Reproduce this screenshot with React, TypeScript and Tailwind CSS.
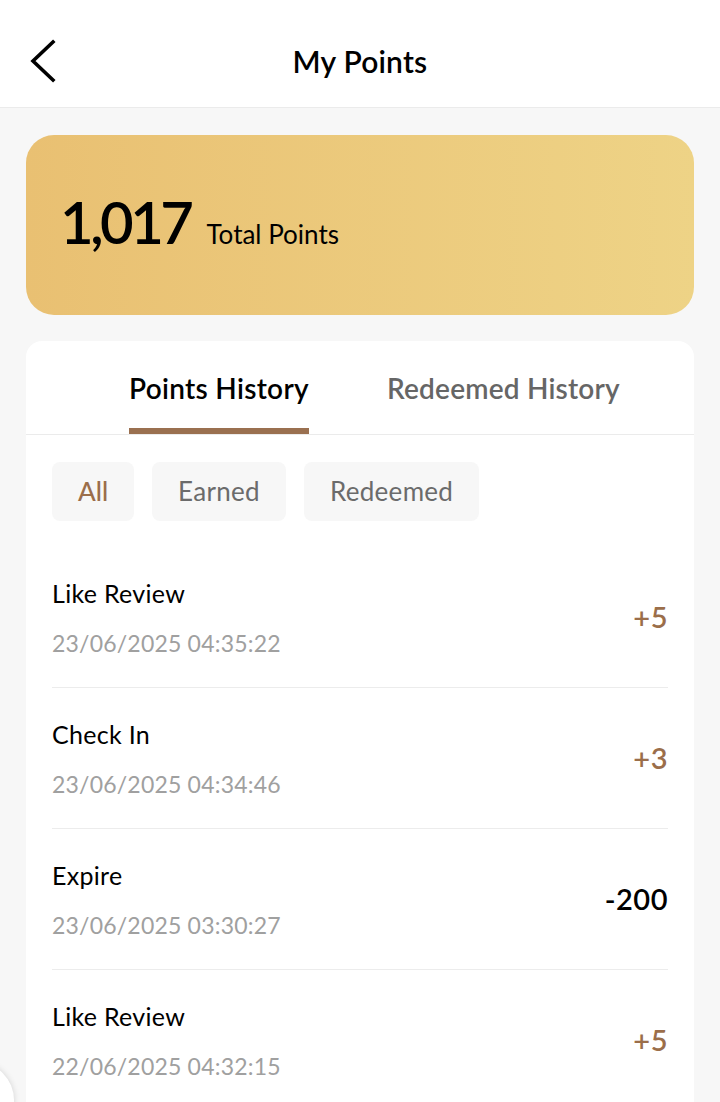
import React from "react";

const rows = [
  { title: "Like Review", date: "23/06/2025 04:35:22", amount: "+5", pos: true },
  { title: "Check In", date: "23/06/2025 04:34:46", amount: "+3", pos: true },
  { title: "Expire", date: "23/06/2025 03:30:27", amount: "-200", pos: false },
  { title: "Like Review", date: "22/06/2025 04:32:15", amount: "+5", pos: true },
];

export default function App() {
  return (
    <div
      className="relative h-[1102px] overflow-hidden bg-[#f7f7f7] text-black"
      style={{ fontFamily: "Lato, 'Noto Sans', sans-serif" }}
    >
      <header className="grid h-[108px] grid-cols-[1fr_auto_1fr] items-center border-b border-[#ebebeb] bg-white pt-[14px]">
        <div className="pl-[28px]">
          <svg width="30" height="44" viewBox="0 0 30 44" fill="none">
            <path d="M25 3 L5 22 L25 41" stroke="#000" strokeWidth="3.6" strokeLinecap="square" strokeLinejoin="miter" />
          </svg>
        </div>
        <h1 className="text-[30px] font-semibold leading-none tracking-[0.2px]">My Points</h1>
        <div />
      </header>

      <div className="mx-[26px] mt-[27px] flex h-[180px] items-center rounded-[28px] bg-gradient-to-r from-[#e9c072] to-[#eed386] pb-[6px] pl-[34px]">
        <div className="flex items-baseline">
          <span className="text-[58px] font-semibold leading-none tracking-[-3.5px]">1,017</span>
          <span className="ml-[16px] text-[26px] leading-none">Total Points</span>
        </div>
      </div>

      <div className="mx-[26px] mt-[26px] rounded-t-[16px] bg-white">
        <div className="flex h-[94px] items-stretch gap-[78px] border-b border-[#ebebeb] pl-[103px]">
          <div className="relative flex items-center">
            <span className="text-[28px] font-semibold leading-none tracking-[0.3px]">Points History</span>
            <div className="absolute bottom-0 left-0 right-0 h-[6px] bg-[#9a7050]" />
          </div>
          <div className="flex items-center">
            <span className="text-[28px] font-semibold leading-none tracking-[0.2px] text-[#666666]">Redeemed History</span>
          </div>
        </div>

        <div className="flex gap-[18px] px-[26px] pt-[27px]">
          <div className="flex h-[59px] items-center rounded-[8px] bg-[#f7f7f7] px-[26px] text-[26px] font-medium text-[#9b6e4a]">All</div>
          <div className="flex h-[59px] items-center rounded-[8px] bg-[#f7f7f7] px-[26px] text-[26px] tracking-[0.3px] text-[#6b6b6b]">Earned</div>
          <div className="flex h-[59px] items-center rounded-[8px] bg-[#f7f7f7] px-[26px] text-[26px] tracking-[0.3px] text-[#6b6b6b]">Redeemed</div>
        </div>

        <div className="mt-[26px] px-[26px]">
          {rows.map((r, i) => (
            <div key={i} className="flex h-[141px] items-center justify-between border-b border-[#ececec]">
              <div className="flex flex-col gap-[23px]">
                <span className="text-[25px] leading-[28px] tracking-[0.3px]">{r.title}</span>
                <span className="text-[23px] leading-[26px] tracking-[0.2px] text-[#a0a0a0]">{r.date}</span>
              </div>
              <span className={"text-[29px] font-semibold tracking-[0.5px] " + (r.pos ? "text-[#9b6e4a]" : "text-black")}>{r.amount}</span>
            </div>
          ))}
        </div>
      </div>

      <div className="absolute left-[-62px] top-[1062px] h-[76px] w-[76px] rounded-full bg-white shadow-[0_0_6px_rgba(0,0,0,0.15)]" />
    </div>
  );
}
